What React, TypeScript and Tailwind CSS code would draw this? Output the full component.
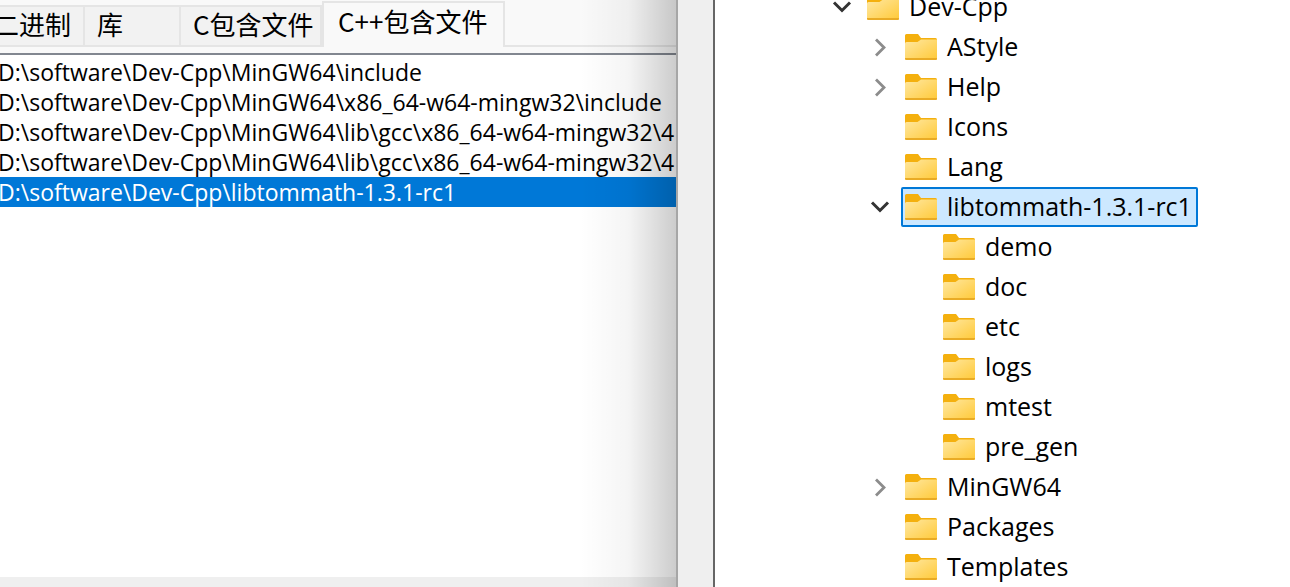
import { useState } from "react";

const tabs = [
  { label: "二进制", width: "w-[85px]", pad: "pr-3 justify-end" },
  { label: "库", width: "w-[96px]", pad: "pl-3 justify-start" },
  { label: "C包含文件", width: "w-[141px]", pad: "pl-3 justify-start" },
  { label: "C++包含文件", width: "w-[183px]", pad: "pl-3.5 justify-start" },
];

const paths = [
  "D:\\software\\Dev-Cpp\\MinGW64\\include",
  "D:\\software\\Dev-Cpp\\MinGW64\\x86_64-w64-mingw32\\include",
  "D:\\software\\Dev-Cpp\\MinGW64\\lib\\gcc\\x86_64-w64-mingw32\\4",
  "D:\\software\\Dev-Cpp\\MinGW64\\lib\\gcc\\x86_64-w64-mingw32\\4",
  "D:\\software\\Dev-Cpp\\libtommath-1.3.1-rc1",
];

type Node = { name: string; level: 0 | 1 | 2; state?: "open" | "closed" };

const nodes: Node[] = [
  { name: "Dev-Cpp", level: 0, state: "open" },
  { name: "AStyle", level: 1, state: "closed" },
  { name: "Help", level: 1, state: "closed" },
  { name: "Icons", level: 1 },
  { name: "Lang", level: 1 },
  { name: "libtommath-1.3.1-rc1", level: 1, state: "open" },
  { name: "demo", level: 2 },
  { name: "doc", level: 2 },
  { name: "etc", level: 2 },
  { name: "logs", level: 2 },
  { name: "mtest", level: 2 },
  { name: "pre_gen", level: 2 },
  { name: "MinGW64", level: 1, state: "closed" },
  { name: "Packages", level: 1 },
  { name: "Templates", level: 1 },
];

const indent = { 0: "pl-[117px]", 1: "pl-[155px]", 2: "pl-[193px]" };

function Folder() {
  return (
    <svg width="32" height="26" viewBox="0 0 32 26" className="shrink-0" aria-hidden="true">
      <path d="M1.500 0H13L16 4H30.500Q32 4 32 5.500V12H0V1.500Q0 0 1.500 0Z" fill="#f4b00e" />
      <path d="M0 9.500Q0 8 1.500 8H12.500L16 5.500H32V24.500Q32 26 30.500 26H1.500Q0 26 0 24.500Z" fill="url(#folder-face)" />
      <path d="M0 24H32V24.500Q32 26 30.500 26H1.500Q0 26 0 24.500Z" fill="#e9ab25" />
    </svg>
  );
}

function Chevron({ open }: { open: boolean }) {
  return open ? (
    <svg width="20" height="20" viewBox="0 0 20 20" fill="none" aria-hidden="true">
      <path d="M2 5.500l8 8 8-8" stroke="#333" strokeWidth="3" />
    </svg>
  ) : (
    <svg width="20" height="20" viewBox="0 0 20 20" fill="none" aria-hidden="true">
      <path d="M6 2.500l8 8-8 8" stroke="#8c8c8c" strokeWidth="2.800" />
    </svg>
  );
}

export default function App() {
  const [tab, setTab] = useState(3);
  const [path, setPath] = useState(4);
  const [folder, setFolder] = useState("libtommath-1.3.1-rc1");

  return (
    <div className="grid h-screen grid-cols-[676fr_39px_575fr] overflow-hidden bg-white font-['Open_Sans','Noto_Sans_CJK_SC',sans-serif] text-black">
      <svg width="0" height="0" className="absolute" aria-hidden="true">
        <linearGradient id="folder-face" x1="0" y1="0" x2="1" y2="1">
          <stop offset="0" stopColor="#ffe8a2" />
          <stop offset="1" stopColor="#ffc937" />
        </linearGradient>
      </svg>

      <section className="relative flex min-w-0 flex-col overflow-hidden bg-[#f9f9f9]">
        <div role="tablist" className="flex h-[47px] shrink-0 items-end font-['Noto_Sans_CJK_SC',sans-serif] text-[26px] leading-8">
          {tabs.map((t, i) => (
            <button
              key={t.label}
              role="tab"
              aria-selected={tab === i}
              onClick={() => setTab(i)}
              className={`flex shrink-0 items-center whitespace-nowrap border-[#e5e5e5] ${t.width} ${t.pad} ${
                tab === i
                  ? "h-[46px] border-x-2 border-t-2 bg-[#f9f9f9] pb-2"
                  : "h-[42px] border-y-2 border-r-2 bg-[#f2f2f2] pb-1"
              }`}
            >
              {t.label}
            </button>
          ))}
          <div className="h-[2px] flex-1 bg-[#e5e5e5]" />
        </div>
        <div className="mt-1.5 flex min-h-0 flex-1 flex-col border-t-2 border-[#828790] bg-white pt-0.5">
          <ul role="listbox" aria-label="C++包含文件" className="flex-1">
            {paths.map((p, i) => (
              <li
                key={i}
                role="option"
                aria-selected={path === i}
                onClick={() => setPath(i)}
                className={`h-[30px] overflow-hidden whitespace-nowrap text-[23px] leading-[30px] ${
                  path === i ? "bg-[#0078d7] text-white" : ""
                }`}
              >
                <span className="-ml-0.5">{p}</span>
              </li>
            ))}
          </ul>
          <div className="h-2.5 shrink-0 bg-[#efefef]" />
        </div>
        <div className="pointer-events-none absolute inset-y-0 right-0 w-24 bg-linear-to-r from-transparent via-black/4 to-black/20" />
      </section>

      <div className="border-x-2 border-l-[#a6a6a6] border-r-[#666] bg-[#efefef]" />

      <nav aria-label="文件夹" className="min-w-0 overflow-hidden">
        <ul role="tree" className="-mt-[13px] text-[25px] leading-[34px]">
          {nodes.map((n) => (
            <li
              key={n.name}
              role="treeitem"
              aria-selected={folder === n.name}
              aria-expanded={n.state ? n.state === "open" : undefined}
              className={`flex h-10 items-center ${indent[n.level]}`}
            >
              <span className="flex w-[31px] shrink-0 items-center">
                {n.state && <Chevron open={n.state === "open"} />}
              </span>
              <button
                onClick={() => setFolder(n.name)}
                className={`flex h-10 items-center gap-2.5 whitespace-nowrap border-2 pl-0.5 pr-1 ${
                  folder === n.name
                    ? "rounded-xs border-[#0078d7] bg-[#cce8ff]"
                    : "border-transparent"
                }`}
              >
                <Folder />
                <span className="pb-0.5">{n.name}</span>
              </button>
            </li>
          ))}
        </ul>
      </nav>
    </div>
  );
}
